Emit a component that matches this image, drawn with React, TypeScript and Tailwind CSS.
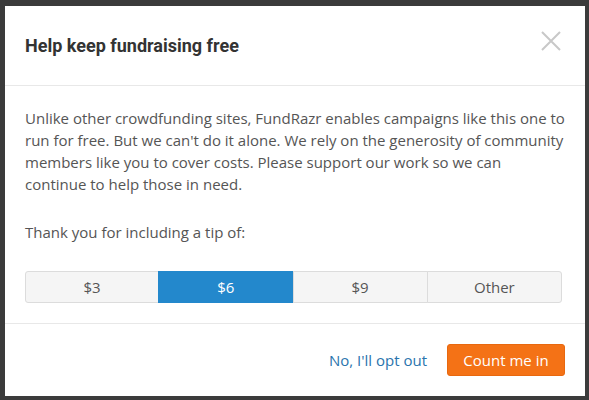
import { useState } from 'react'

const tips = ['$3', '$6', '$9', 'Other']

export default function App() {
  const [tip, setTip] = useState('$6')

  return (
    <div className="h-[400px] w-[589px] overflow-hidden bg-[#3b3b3b] pl-[5px] pt-[6px]">
      <div className="flex h-[390px] w-[580px] flex-col bg-white font-['Open_Sans',sans-serif]">
        <div className="flex h-[80px] shrink-0 items-center justify-between border-b border-[#e8e8e8] pl-5 pr-6">
          <h2 className="font-['Roboto',sans-serif] text-[18px] font-bold text-[#333]">
            Help keep fundraising free
          </h2>
          <button type="button" aria-label="Close" className="-mt-[9px] text-[#c8c8c8]">
            <svg width="20" height="20" viewBox="0 0 20 20" fill="none">
              <path d="M1 1 L19 19 M19 1 L1 19" stroke="currentColor" strokeWidth="2" />
            </svg>
          </button>
        </div>

        <div className="flex-1 px-5 pt-[21px] text-[15px] leading-[22px] text-[#555]">
          <p>
            Unlike other crowdfunding sites, FundRazr enables campaigns like this one to run for
            free. But we can't do it alone. We rely on the generosity of community members like you
            to cover costs. Please support our work so we can continue to help those in need.
          </p>
          <p className="mt-[26px]">Thank you for including a tip of:</p>
          <div className="mt-[28px] grid w-[537px] grid-cols-4">
            {tips.map((t, i) => (
              <button
                key={t}
                type="button"
                onClick={() => setTip(t)}
                className={`h-[32px] border text-[15px] ${
                  tip === t
                    ? 'border-[#2388cc] bg-[#2388cc] text-white'
                    : 'border-[#dcdcdc] bg-[#f5f5f5] text-[#555]'
                } ${i === 0 ? 'rounded-l-[3px]' : ''} ${i === 3 ? 'rounded-r-[3px]' : ''} ${
                  i > 0 ? '-ml-px' : ''
                }`}
              >
                {t}
              </button>
            ))}
          </div>
        </div>

        <div className="flex h-[73px] shrink-0 items-center justify-end gap-5 border-t border-[#e8e8e8] pr-5">
          <button type="button" className="text-[15px] text-[#2a74ad]">
            No, I'll opt out
          </button>
          <button
            type="button"
            className="h-[32px] w-[118px] rounded-[3px] border border-[#e8680f] bg-[#f47216] text-[15px] text-white"
          >
            Count me in
          </button>
        </div>
      </div>
    </div>
  )
}
